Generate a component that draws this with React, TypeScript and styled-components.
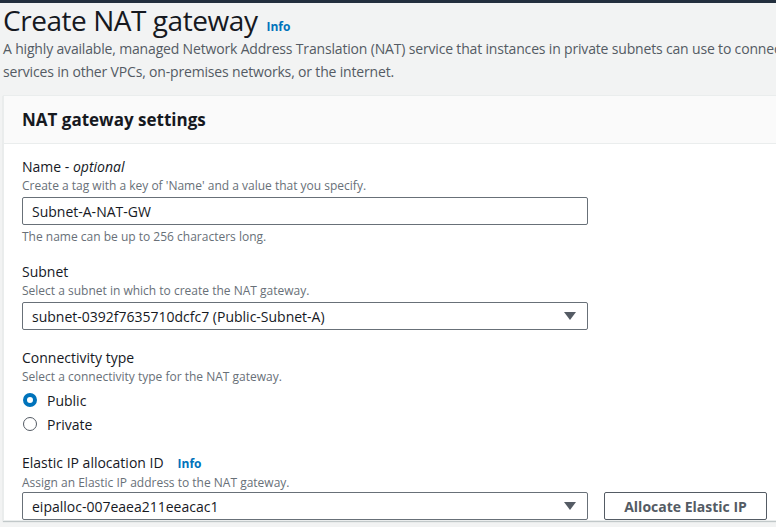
import React from 'react'
import styled, { createGlobalStyle } from 'styled-components'

const GlobalStyle = createGlobalStyle`
	html, body {
		margin: 0;
		padding: 0;
		background: #f2f3f3;
		overflow: hidden;
	}
	body {
		font-family: 'Open Sans', 'Noto Sans', sans-serif;
		color: #16191f;
	}
`

const Page = styled.div`
	width: 776px;
	height: 527px;
	overflow: hidden;
	border-top: 3px solid #232f3e;
	box-sizing: border-box;
`

const HeaderArea = styled.div`
	padding: 0 0 0 3px;
`

const TitleRow = styled.div`
	display: flex;
	align-items: baseline;
	gap: 9px;
	height: 34px;
`

const Title = styled.h1`
	margin: 0;
	font-size: 28px;
	font-weight: 400;
	line-height: 34px;
	letter-spacing: -0.45px;
	color: #16191f;
`

const InfoLink = styled.span`
	font-size: 12px;
	font-weight: 700;
	color: #0073bb;
`

const Description = styled.p`
	margin: 0;
	font-size: 14px;
	line-height: 23px;
	letter-spacing: -0.17px;
	color: #545b64;
	white-space: nowrap;
`

const Panel = styled.section`
	margin: 12px 0 0 3px;
	background: #ffffff;
	border: 1px solid #eaeded;
	border-right: none;
	box-shadow: 0 1px 1px 0 rgba(0, 28, 36, 0.2);
`

const PanelHeader = styled.div`
	background: #fafafa;
	border-bottom: 1px solid #eaeded;
	height: 47px;
	display: flex;
	align-items: center;
	padding-left: 18px;
`

const PanelTitle = styled.h2`
	margin: 0;
	font-size: 17px;
	font-weight: 700;
	color: #16191f;
`

const PanelBody = styled.div`
	padding: 13px 0 0 18px;
	display: flex;
	flex-direction: column;
	gap: 16px;
`

const Field = styled.div<{ $extra?: number }>`
	display: flex;
	flex-direction: column;
	margin-top: ${p => p.$extra ?? 0}px;
`

const Label = styled.label`
	font-size: 14px;
	line-height: 20px;
	color: #16191f;
	display: flex;
	gap: 14px;
	align-items: baseline;

	em {
		font-style: italic;
	}
`

const Hint = styled.div`
	font-size: 12px;
	line-height: 18px;
	color: #687078;
`

const Constraint = styled(Hint)`
	margin-top: 3px;
`

const ControlRow = styled.div<{ $tight?: boolean }>`
	display: flex;
	align-items: center;
	gap: 16px;
	margin-top: ${p => (p.$tight ? 0 : 2)}px;
`

const Input = styled.div`
	width: 566px;
	height: 28px;
	box-sizing: border-box;
	border: 1px solid #687078;
	border-radius: 2px;
	padding: 0 9px;
	display: flex;
	align-items: center;
	justify-content: space-between;
	font-size: 14px;
	color: #16191f;
`

const Caret = styled.span`
	width: 0;
	height: 0;
	margin-right: 2px;
	border-left: 6px solid transparent;
	border-right: 6px solid transparent;
	border-top: 8px solid #545b64;
`

const RadioGroup = styled.div`
	display: flex;
	flex-direction: column;
	gap: 4px;
	margin-top: 4px;
`

const RadioRow = styled.div`
	display: flex;
	align-items: center;
	gap: 10px;
	height: 20px;
	font-size: 14px;
	color: #16191f;
	padding-left: 1px;
`

const RadioDot = styled.span<{ $checked?: boolean }>`
	width: 14px;
	height: 14px;
	box-sizing: border-box;
	border-radius: 50%;
	border: ${p => (p.$checked ? '4px solid #0073bb' : '1.5px solid #545b64')};
	background: #ffffff;
`

const Button = styled.div`
	width: 163px;
	height: 28px;
	box-sizing: border-box;
	border: 1px solid #545b64;
	border-radius: 2px;
	display: flex;
	align-items: center;
	justify-content: center;
	font-size: 14px;
	font-weight: 700;
	color: #545b64;
`

const App: React.FC = () => {
	return (
		<>
			<GlobalStyle />
			<Page>
				<HeaderArea>
					<TitleRow>
						<Title>Create NAT gateway</Title>
						<InfoLink>Info</InfoLink>
					</TitleRow>
					<Description>
						A highly available, managed Network Address Translation (NAT) service that instances in private subnets can use to connect to
						<br />
						services in other VPCs, on-premises networks, or the internet.
					</Description>
				</HeaderArea>
				<Panel>
					<PanelHeader>
						<PanelTitle>NAT gateway settings</PanelTitle>
					</PanelHeader>
					<PanelBody>
						<Field>
							<Label>
								<span>
									Name - <em>optional</em>
								</span>
							</Label>
							<Hint>Create a tag with a key of 'Name' and a value that you specify.</Hint>
							<ControlRow>
								<Input>Subnet-A-NAT-GW</Input>
							</ControlRow>
							<Constraint>The name can be up to 256 characters long.</Constraint>
						</Field>

						<Field>
							<Label>Subnet</Label>
							<Hint>Select a subnet in which to create the NAT gateway.</Hint>
							<ControlRow>
								<Input>
									subnet-0392f7635710dcfc7 (Public-Subnet-A)
									<Caret />
								</Input>
							</ControlRow>
						</Field>

						<Field $extra={2}>
							<Label>Connectivity type</Label>
							<Hint>Select a connectivity type for the NAT gateway.</Hint>
							<RadioGroup>
								<RadioRow>
									<RadioDot $checked />
									Public
								</RadioRow>
								<RadioRow>
									<RadioDot />
									Private
								</RadioRow>
							</RadioGroup>
						</Field>

						<Field $extra={3}>
							<Label>
								Elastic IP allocation ID
								<InfoLink>Info</InfoLink>
							</Label>
							<Hint>Assign an Elastic IP address to the NAT gateway.</Hint>
							<ControlRow $tight>
								<Input>
									eipalloc-007eaea211eeacac1
									<Caret />
								</Input>
								<Button>Allocate Elastic IP</Button>
							</ControlRow>
						</Field>
					</PanelBody>
				</Panel>
			</Page>
		</>
	)
}

export default App
